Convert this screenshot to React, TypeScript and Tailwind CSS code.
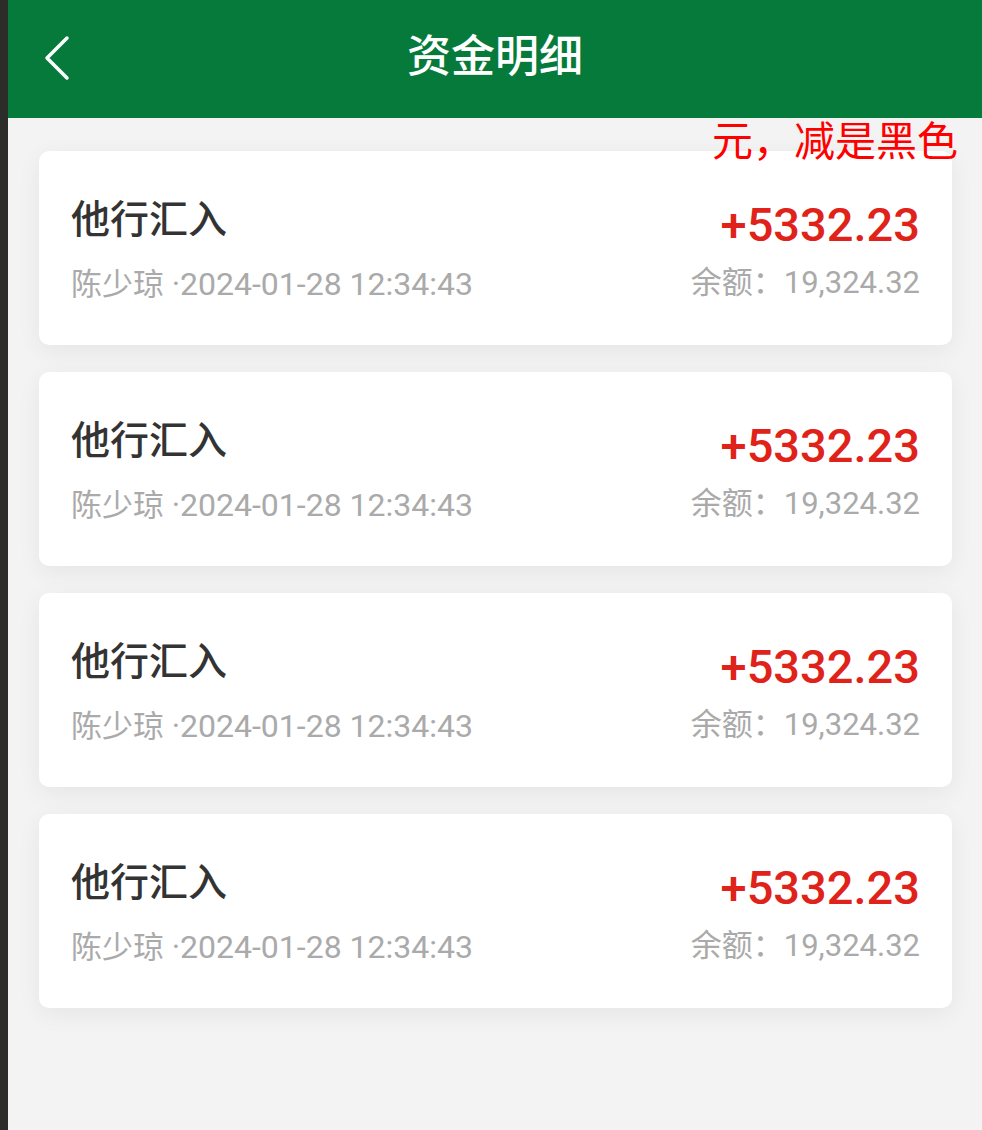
import React from 'react';

const records = [1, 2, 3, 4].map((i) => ({
  id: i,
  title: '他行汇入',
  name: '陈少琼',
  time: '2024-01-28 12:34:43',
  amount: '+5332.23',
  balance: '19,324.32',
}));

const App = () => {
  return (
    <div
      className="flex w-[982px] h-[1130px] overflow-hidden bg-[#f2f3f2]"
      style={{ fontFamily: 'Roboto, "Noto Sans CJK SC", sans-serif' }}
    >
      <aside className="w-[8px] shrink-0 bg-[#2c2c29]" />

      <main className="relative flex-1 flex flex-col">
        <header className="h-[118px] shrink-0 bg-[#067a3a] flex items-center justify-center relative">
          <button className="absolute left-[28px] top-[36px] w-[44px] h-[44px] flex items-center justify-center">
            <svg width="30" height="46" viewBox="0 0 30 46" fill="none">
              <path
                d="M24 3 L4 23 L24 43"
                stroke="white"
                strokeWidth="3.5"
                strokeLinecap="round"
                strokeLinejoin="round"
              />
            </svg>
          </button>
          <h1 className="text-[44px] leading-[60px] font-medium text-white -mt-[5px]">资金明细</h1>
        </header>

        <span className="absolute right-[24px] top-[114px] text-[41px] leading-[56px] text-[#ff0000]">
          元，减是黑色
        </span>

        <section className="flex flex-col gap-[27px] pt-[33px] pl-[31px] pr-[30px]">
          {records.map((r) => (
            <div
              key={r.id}
              className="h-[194px] bg-white rounded-[10px] shadow-[0_6px_24px_rgba(0,0,0,0.06)] flex items-center justify-between pl-[32px] pr-[32px]"
            >
              <div className="flex flex-col gap-[18px] mt-[4px]">
                <div className="text-[39px] leading-[50px] text-[#333333] font-medium">{r.title}</div>
                <div className="text-[31px] leading-[42px] text-[#aaaaaa]">
                  {r.name} <span className="text-[32px]">·{r.time}</span>
                </div>
              </div>
              <div className="flex flex-col items-end gap-[10px] mt-[4px]">
                <div className="text-[47px] leading-[56px] text-[#e0231a] font-medium">{r.amount}</div>
                <div className="text-[31px] leading-[40px] text-[#aaaaaa]">余额：{r.balance}</div>
              </div>
            </div>
          ))}
        </section>
      </main>
    </div>
  );
};

export default App;
